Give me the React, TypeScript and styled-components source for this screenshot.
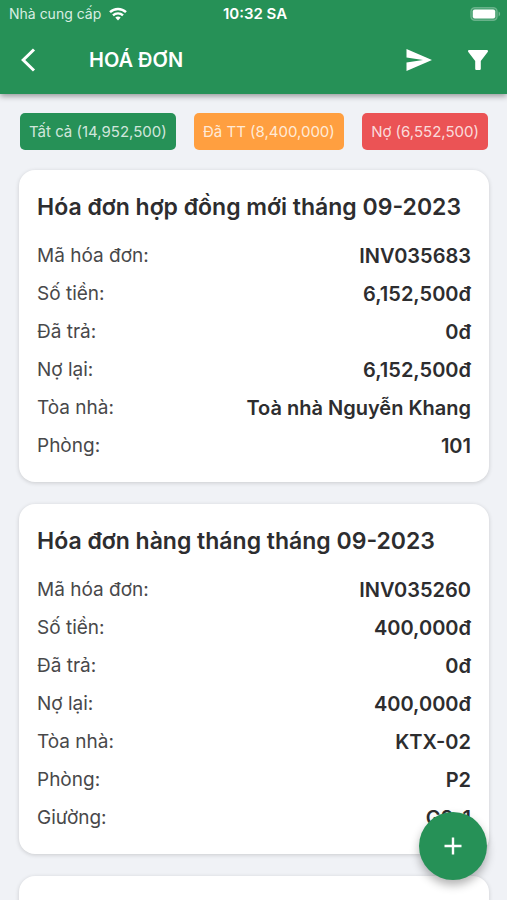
import React from "react";
import styled, { createGlobalStyle } from "styled-components";

const GlobalStyle = createGlobalStyle`
  *, *::before, *::after { box-sizing: border-box; }
  body { margin: 0; background: #f0f2f6; font-family: Inter, "Noto Sans", sans-serif; }
  button { font: inherit; border: 0; padding: 0; cursor: pointer; }
`;

const Screen = styled.div`
  height: 100vh;
  display: flex;
  flex-direction: column;
  overflow: hidden;
`;

const Header = styled.header`
  flex: none;
  background: #269157;
  color: #fff;
  box-shadow: 0 2px 6px rgba(0, 0, 0, 0.4);
  z-index: 1;
`;

const StatusBar = styled.div`
  height: 28px;
  padding: 0 6px 0 9px;
  display: grid;
  grid-template-columns: 1fr auto 1fr;
  align-items: center;
  font-size: 14px;
  line-height: 28px;
`;

const Carrier = styled.span`
  display: flex;
  align-items: center;
  gap: 8px;
  color: #d9eee2;
`;

const Clock = styled.time`
  font-size: 15px;
  font-weight: 600;
`;

const Battery = styled.span`
  justify-self: end;
  display: flex;
`;

const Toolbar = styled.div`
  height: 66px;
  padding: 0 14px 2px 13px;
  display: flex;
  align-items: center;
`;

const IconButton = styled.button`
  width: 30px;
  height: 40px;
  display: grid;
  place-items: center;
  color: inherit;
  background: none;
`;

const PageTitle = styled.h1`
  flex: 1;
  margin: 0 0 0 46px;
  font-size: 20px;
  line-height: 24px;
  font-weight: 600;
`;

const Actions = styled.div`
  display: flex;
  gap: 29px;
`;

const Content = styled.main`
  flex: 1;
  min-height: 0;
  overflow-y: auto;
  scrollbar-width: none;
  padding: 19px 18px 24px 19px;
`;

const Filters = styled.div`
  display: flex;
  justify-content: space-between;
  padding: 0 1px;
  margin-bottom: 20px;
`;

const FilterChip = styled.button<{ $color: string }>`
  height: 37px;
  padding: 0 9px;
  border-radius: 5px;
  background: ${({ $color }) => $color};
  color: rgba(255, 255, 255, 0.8);
  font-size: 15px;
  white-space: nowrap;
`;

const InvoiceList = styled.div`
  display: flex;
  flex-direction: column;
  gap: 22px;
`;

const Card = styled.article`
  min-height: 120px;
  padding: 17px 18px;
  border-radius: 16px;
  background: #fff;
  box-shadow: 0 1px 4px rgba(0, 0, 0, 0.16);
`;

const CardTitle = styled.h2`
  margin: 0 0 10px;
  font-size: 23px;
  line-height: 40px;
  font-weight: 600;
  color: #2d2d2f;
`;

const Details = styled.dl`
  margin: 0;
`;

const DetailRow = styled.div`
  display: flex;
  justify-content: space-between;
  line-height: 38px;
  font-size: 19px;
`;

const Label = styled.dt`
  color: #48484a;
`;

const Value = styled.dd`
  margin: 0;
  font-size: 20px;
  font-weight: 600;
  color: #2d2d2f;
`;

const AddButton = styled.button`
  position: fixed;
  right: 20px;
  bottom: 20px;
  z-index: 2;
  width: 68px;
  height: 68px;
  border-radius: 50%;
  display: grid;
  place-items: center;
  color: #fff;
  background: #269157;
  box-shadow: 0 5px 10px rgba(0, 0, 0, 0.3);
`;

const filters = [
  { label: "Tất cả (14,952,500)", color: "#269157" },
  { label: "Đã TT (8,400,000)", color: "#ff9f40" },
  { label: "Nợ (6,552,500)", color: "#eb5355" },
];

const invoices = [
  {
    title: "Hóa đơn hợp đồng mới tháng 09-2023",
    details: [
      ["Mã hóa đơn:", "INV035683"],
      ["Số tiền:", "6,152,500đ"],
      ["Đã trả:", "0đ"],
      ["Nợ lại:", "6,152,500đ"],
      ["Tòa nhà:", "Toà nhà Nguyễn Khang"],
      ["Phòng:", "101"],
    ],
  },
  {
    title: "Hóa đơn hàng tháng tháng 09-2023",
    details: [
      ["Mã hóa đơn:", "INV035260"],
      ["Số tiền:", "400,000đ"],
      ["Đã trả:", "0đ"],
      ["Nợ lại:", "400,000đ"],
      ["Tòa nhà:", "KTX-02"],
      ["Phòng:", "P2"],
      ["Giường:", "G2-1"],
    ],
  },
];

const WifiIcon = () => (
  <svg width="18" height="14" viewBox="0 0 18 14" fill="none" stroke="#fff" strokeWidth="2.4" aria-hidden="true">
    <path d="M1 5.2C5.4.9 12.6.9 17 5.2" />
    <path d="M4 8.4c2.8-2.7 7.2-2.7 10 0" />
    <path d="M6.3 10.6c1.5-1.4 3.9-1.4 5.4 0L9 13.4z" fill="#fff" stroke="none" />
  </svg>
);

const BatteryIcon = () => (
  <svg width="31" height="14" viewBox="0 0 31 14" aria-hidden="true">
    <rect x=".8" y=".6" width="26.4" height="12.8" rx="4" fill="#fff" fillOpacity=".15" stroke="#fff" strokeOpacity=".25" strokeWidth="1.2" />
    <rect x="2.8" y="2.4" width="22.4" height="9.2" rx="2" fill="#fff" />
    <path d="M28.6 4.6c2 .8 2 4 0 4.8z" fill="#fff" fillOpacity=".35" />
  </svg>
);

const BackIcon = () => (
  <svg width="16" height="24" viewBox="0 0 16 24" fill="none" stroke="currentColor" strokeWidth="3" aria-hidden="true">
    <path d="M14 1.5 3.2 12 14 22.5" />
  </svg>
);

const SendIcon = () => (
  <svg width="26" height="22" viewBox="0 0 26 22" fill="currentColor" aria-hidden="true">
    <path d="M.5 0 26 11 .5 22v-8.6L17 11 .5 8.6z" />
  </svg>
);

const FunnelIcon = () => (
  <svg width="20" height="20" viewBox="0 0 20 20" fill="currentColor" aria-hidden="true">
    <path d="M1.2 0h17.6c1 0 1.5 1.1.9 1.9L12.8 11v7.7c0 .7-.6 1.3-1.3 1.3H8.5c-.7 0-1.3-.6-1.3-1.3V11L.3 1.9C-.3 1.1.2 0 1.2 0z" />
  </svg>
);

const PlusIcon = () => (
  <svg width="18" height="18" viewBox="0 0 18 18" stroke="currentColor" strokeWidth="2.4" aria-hidden="true">
    <path d="M9 .5v17M.5 9h17" />
  </svg>
);

export default function App() {
  return (
    <Screen>
      <GlobalStyle />
      <Header>
        <StatusBar>
          <Carrier>
            Nhà cung cấp
            <WifiIcon />
          </Carrier>
          <Clock>10:32 SA</Clock>
          <Battery>
            <BatteryIcon />
          </Battery>
        </StatusBar>
        <Toolbar>
          <IconButton aria-label="Quay lại">
            <BackIcon />
          </IconButton>
          <PageTitle>HOÁ ĐƠN</PageTitle>
          <Actions>
            <IconButton aria-label="Gửi">
              <SendIcon />
            </IconButton>
            <IconButton aria-label="Lọc">
              <FunnelIcon />
            </IconButton>
          </Actions>
        </Toolbar>
      </Header>
      <Content>
        <Filters>
          {filters.map(({ label, color }) => (
            <FilterChip key={label} $color={color}>
              {label}
            </FilterChip>
          ))}
        </Filters>
        <InvoiceList>
          {invoices.map(({ title, details }) => (
            <Card key={title}>
              <CardTitle>{title}</CardTitle>
              <Details>
                {details.map(([label, value]) => (
                  <DetailRow key={label}>
                    <Label>{label}</Label>
                    <Value>{value}</Value>
                  </DetailRow>
                ))}
              </Details>
            </Card>
          ))}
          <Card />
        </InvoiceList>
      </Content>
      <AddButton aria-label="Thêm hóa đơn">
        <PlusIcon />
      </AddButton>
    </Screen>
  );
}
